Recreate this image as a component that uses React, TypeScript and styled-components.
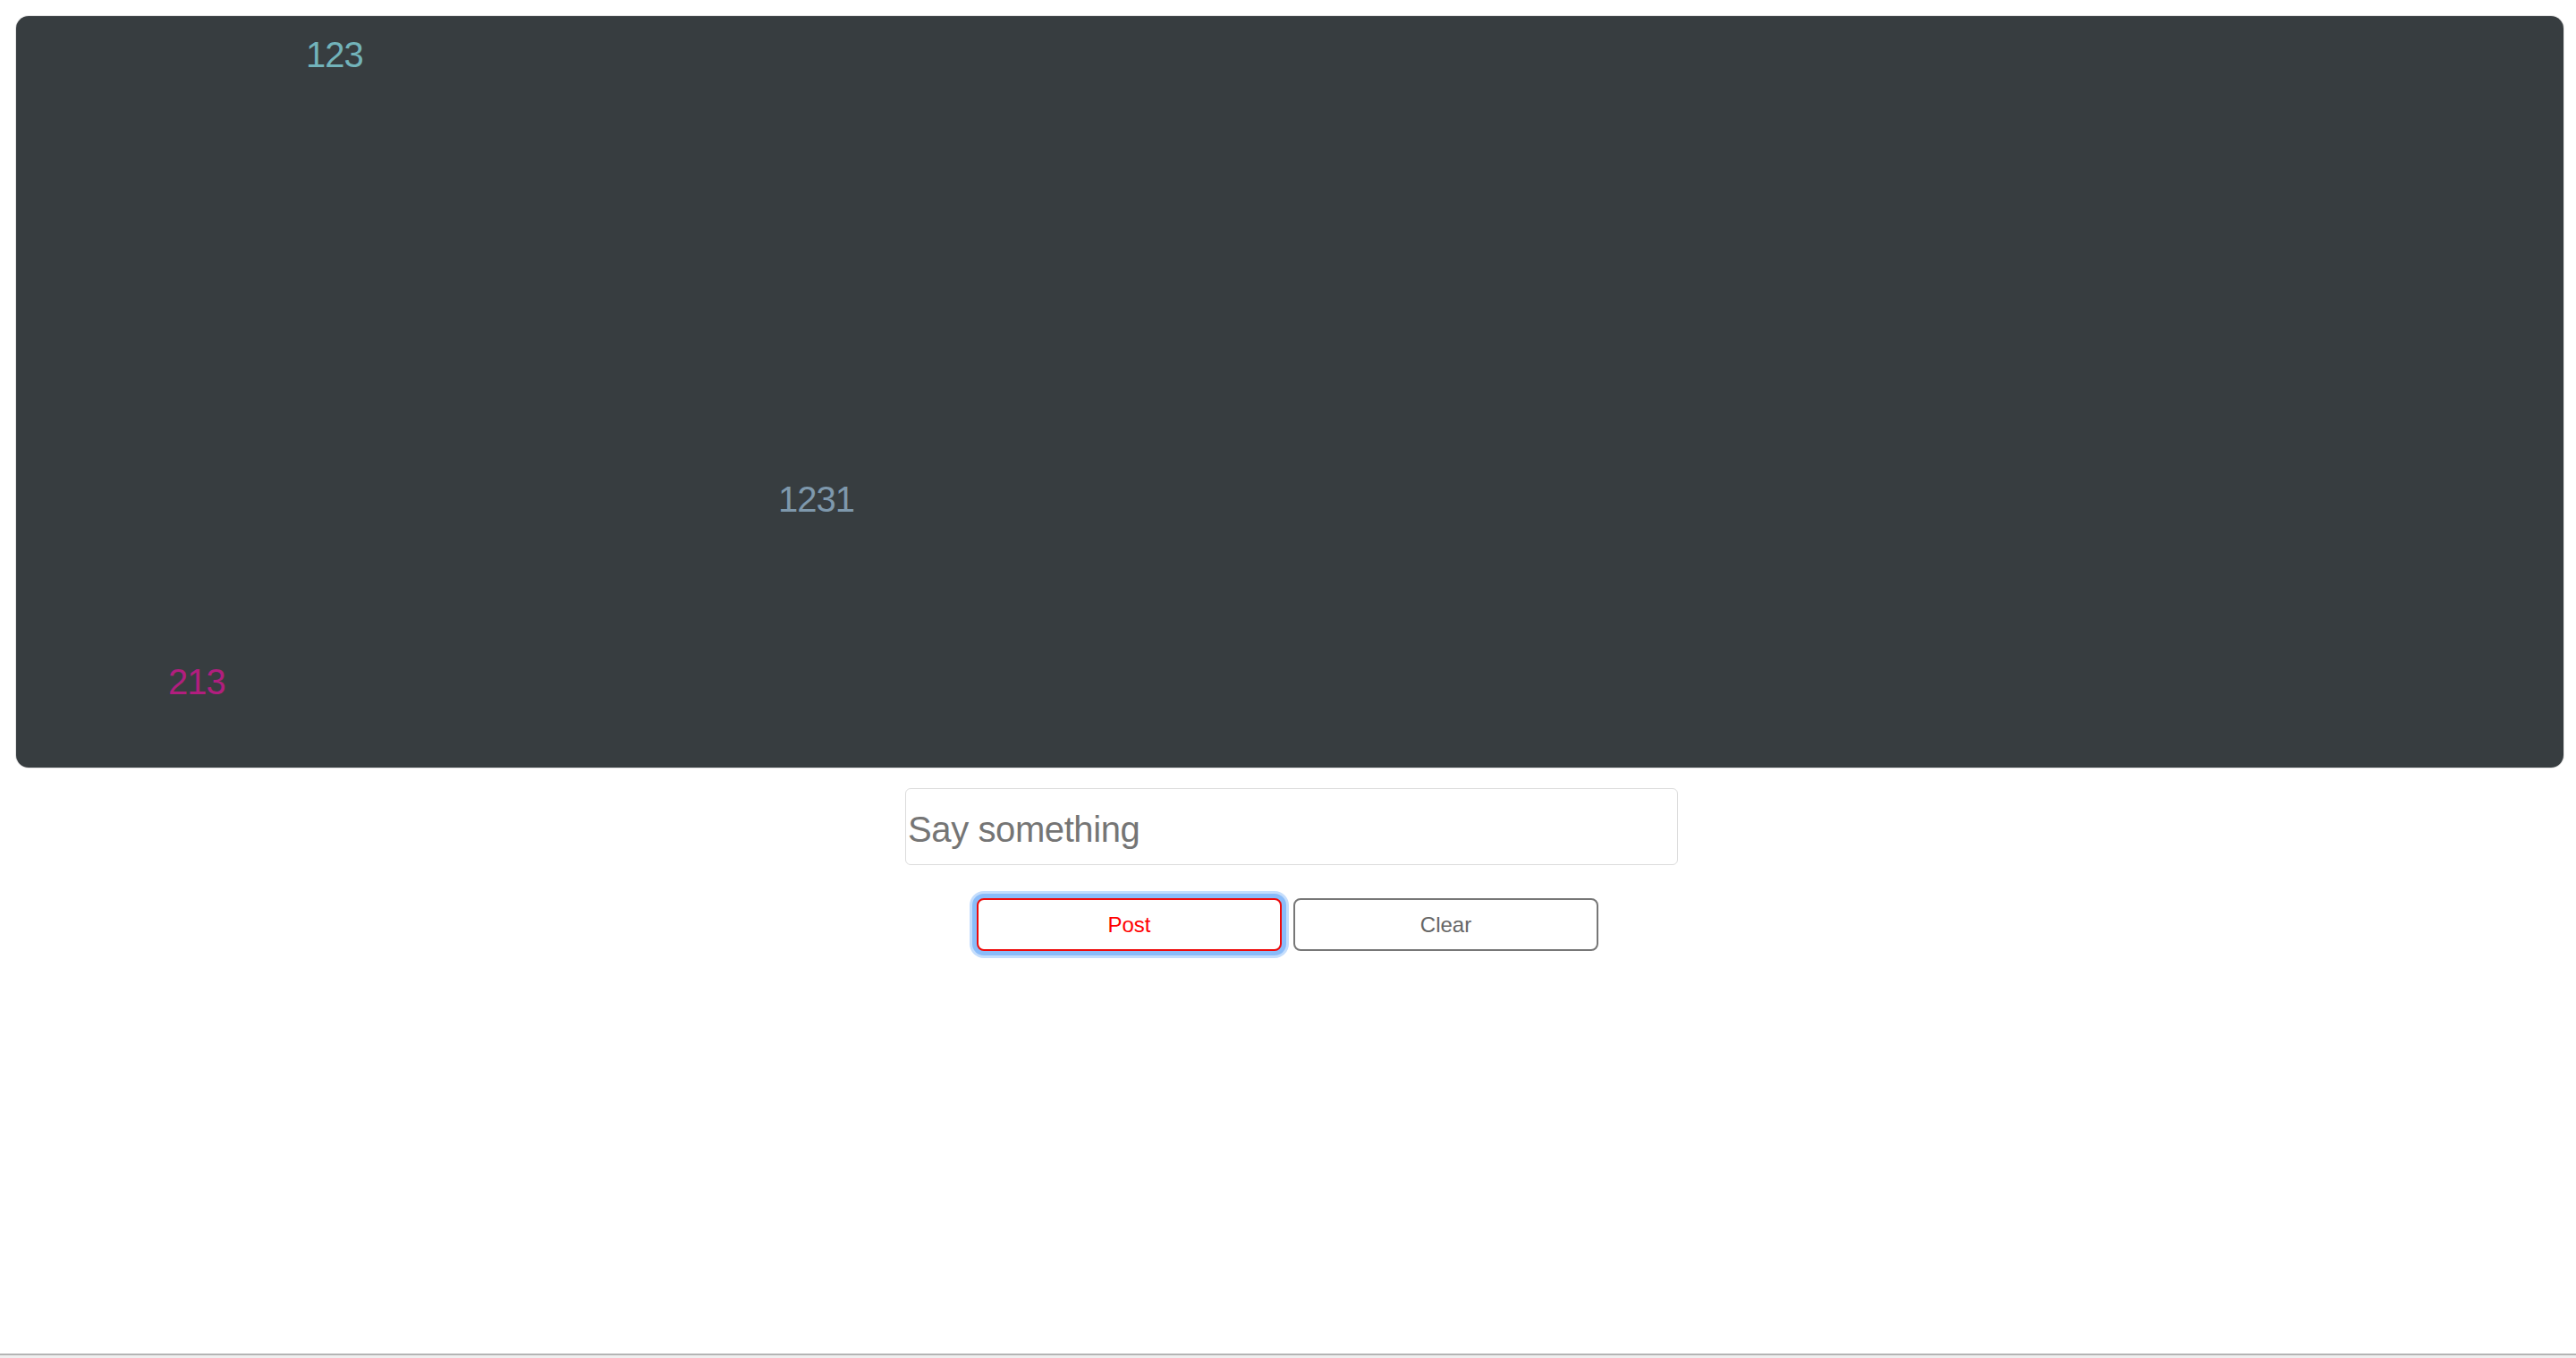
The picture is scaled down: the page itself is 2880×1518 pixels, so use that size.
import React, { useState } from 'react';
import styled, { createGlobalStyle } from 'styled-components';

const GlobalStyle = createGlobalStyle`
  html, body { margin: 0; padding: 0; background: #fff; }
  body { font-family: "Liberation Sans", Arial, Helvetica, sans-serif; }
  * { box-sizing: border-box; }
`;

interface Comment {
  id: number;
  text: string;
  color: string;
  left: number;
  top: number;
}

const comments: Comment[] = [
  { id: 1, text: '123', color: '#72b3ba', left: 324, top: 23 },
  { id: 2, text: '1231', color: '#7e98ac', left: 852, top: 520 },
  { id: 3, text: '213', color: '#b11e7e', left: 170, top: 724 },
];

const Page = styled.div`
  display: flex;
  flex-direction: column;
  min-height: 100vh;
  padding: 18px 14px 0 18px;
`;

const Screen = styled.div`
  position: relative;
  height: 840px;
  background: #373d40;
  border-radius: 14px;
  box-shadow: 0 0 0 1px #e3e3e3;
  overflow: hidden;
`;

const Bullet = styled.span<{ $color: string }>`
  position: absolute;
  font-size: 40px;
  line-height: 1;
  letter-spacing: -1px;
  white-space: nowrap;
  color: ${(p) => p.$color};
`;

const Input = styled.input`
  display: block;
  width: 864px;
  height: 86px;
  margin: 23px 0 0 994px;
  padding: 6px 2px 0;
  border: 1px solid #dcdcdc;
  border-radius: 6px;
  font-family: "Liberation Sans", Arial, sans-serif;
  font-size: 40px;
  letter-spacing: -0.4px;
  color: #333;
  outline: none;

  &::placeholder { color: #757575; }
`;

const Actions = styled.div`
  display: flex;
  gap: 13px;
  margin: 37px 0 0 1074px;
`;

const Button = styled.button<{ $tone: 'primary' | 'plain'; $focused?: boolean }>`
  width: 341px;
  height: 59px;
  padding: 0;
  background: #fff;
  border: 2px solid ${(p) => (p.$tone === 'primary' ? '#ee0a0a' : '#777')};
  border-radius: 8px;
  color: ${(p) => (p.$tone === 'primary' ? '#f00' : '#666')};
  font-family: "Liberation Sans", Arial, sans-serif;
  font-size: 24px;
  cursor: pointer;
  outline: none;
  box-shadow: ${(p) => (p.$focused ? '0 0 0 5px #8abcf9, 0 0 0 8px #c4ddfc' : 'none')};
`;

const Footer = styled.div`
  margin: auto -14px 0 -18px;
  height: 5px;
  border-top: 2px solid #b4b4b4;
  background: #efefef;
`;

export default function App() {
  const [text, setText] = useState('');

  return (
    <>
      <GlobalStyle />
      <Page>
        <Screen>
          {comments.map((c) => (
            <Bullet key={c.id} $color={c.color} style={{ left: c.left, top: c.top }}>
              {c.text}
            </Bullet>
          ))}
        </Screen>
        <Input
          placeholder="Say something"
          value={text}
          onChange={(e) => setText(e.target.value)}
        />
        <Actions>
          <Button type="button" $tone="primary" $focused>Post</Button>
          <Button type="button" $tone="plain" onClick={() => setText('')}>Clear</Button>
        </Actions>
        <Footer />
      </Page>
    </>
  );
}
